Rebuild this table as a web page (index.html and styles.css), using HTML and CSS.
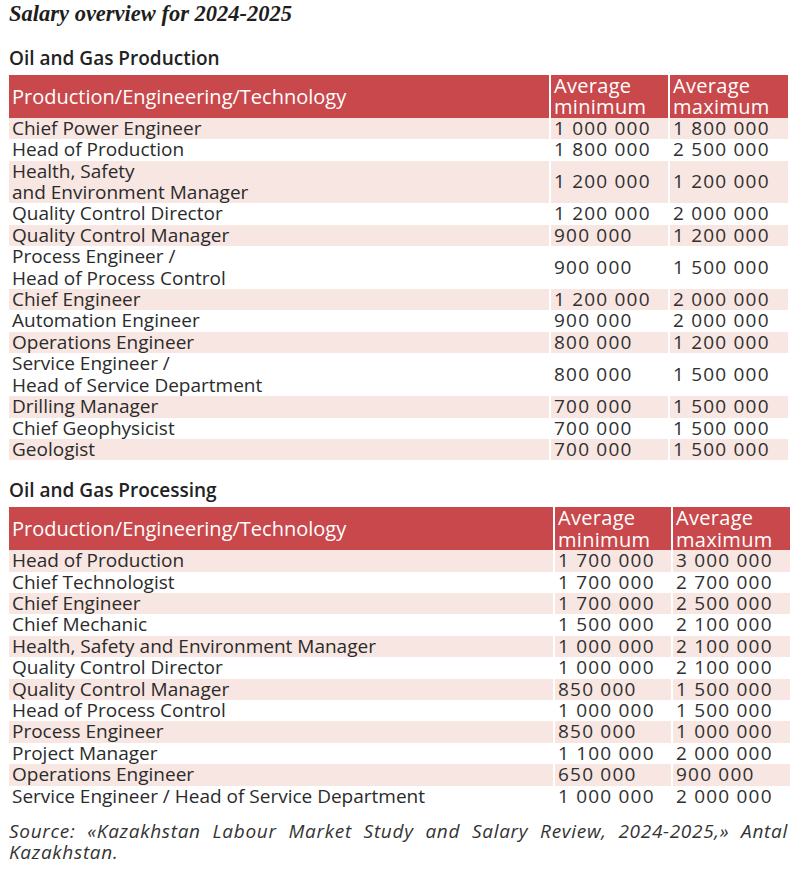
FILE: index.html
```html
<!DOCTYPE html>
<html lang="en">
<head>
  <meta charset="UTF-8" />
  <title>Salary overview for 2024-2025</title>
  <link rel="stylesheet" href="styles.css">
</head>
<body>

<h1 class="title">Salary overview for 2024-2025</h1>

<h2 class="section">Oil and Gas Production</h2>
<table class="salary first">
  <thead>
    <tr>
      <th class="role">Production/Engineering/Technology</th>
      <th class="num">Average<br>minimum</th>
      <th class="num">Average<br>maximum</th>
    </tr>
  </thead>
  <tbody>
    <tr><td>Chief Power Engineer</td><td class="num">1 000 000</td><td class="num">1 800 000</td></tr>
    <tr><td>Head of Production</td><td class="num">1 800 000</td><td class="num">2 500 000</td></tr>
    <tr><td>Health, Safety<br>and Environment Manager</td><td class="num">1 200 000</td><td class="num">1 200 000</td></tr>
    <tr><td>Quality Control Director</td><td class="num">1 200 000</td><td class="num">2 000 000</td></tr>
    <tr><td>Quality Control Manager</td><td class="num">900 000</td><td class="num">1 200 000</td></tr>
    <tr><td>Process Engineer /<br>Head of Process Control</td><td class="num">900 000</td><td class="num">1 500 000</td></tr>
    <tr><td>Chief Engineer</td><td class="num">1 200 000</td><td class="num">2 000 000</td></tr>
    <tr><td>Automation Engineer</td><td class="num">900 000</td><td class="num">2 000 000</td></tr>
    <tr><td>Operations Engineer</td><td class="num">800 000</td><td class="num">1 200 000</td></tr>
    <tr><td>Service Engineer /<br>Head of Service Department</td><td class="num">800 000</td><td class="num">1 500 000</td></tr>
    <tr><td>Drilling Manager</td><td class="num">700 000</td><td class="num">1 500 000</td></tr>
    <tr><td>Chief Geophysicist</td><td class="num">700 000</td><td class="num">1 500 000</td></tr>
    <tr><td>Geologist</td><td class="num">700 000</td><td class="num">1 500 000</td></tr>
  </tbody>
</table>

<h2 class="section second-head">Oil and Gas Processing</h2>
<table class="salary second">
  <thead>
    <tr>
      <th class="role">Production/Engineering/Technology</th>
      <th class="num">Average<br>minimum</th>
      <th class="num">Average<br>maximum</th>
    </tr>
  </thead>
  <tbody>
    <tr><td>Head of Production</td><td class="num">1 700 000</td><td class="num">3 000 000</td></tr>
    <tr><td>Chief Technologist</td><td class="num">1 700 000</td><td class="num">2 700 000</td></tr>
    <tr><td>Chief Engineer</td><td class="num">1 700 000</td><td class="num">2 500 000</td></tr>
    <tr><td>Chief Mechanic</td><td class="num">1 500 000</td><td class="num">2 100 000</td></tr>
    <tr><td>Health, Safety and Environment Manager</td><td class="num">1 000 000</td><td class="num">2 100 000</td></tr>
    <tr><td>Quality Control Director</td><td class="num">1 000 000</td><td class="num">2 100 000</td></tr>
    <tr><td>Quality Control Manager</td><td class="num">850 000</td><td class="num">1 500 000</td></tr>
    <tr><td>Head of Process Control</td><td class="num">1 000 000</td><td class="num">1 500 000</td></tr>
    <tr><td>Process Engineer</td><td class="num">850 000</td><td class="num">1 000 000</td></tr>
    <tr><td>Project Manager</td><td class="num">1 100 000</td><td class="num">2 000 000</td></tr>
    <tr><td>Operations Engineer</td><td class="num">650 000</td><td class="num">900 000</td></tr>
    <tr><td>Service Engineer / Head of Service Department</td><td class="num">1 000 000</td><td class="num">2 000 000</td></tr>
  </tbody>
</table>

<p class="source">Source: «Kazakhstan Labour Market Study and Salary Review, 2024-2025,» Antal Kazakhstan.</p>

</body>
</html>
```

FILE: styles.css
```css
* {
  margin: 0;
  padding: 0;
  box-sizing: border-box;
}

body {
  background: white;
  padding: 0 9px;
  color: #2b2b2b;
  font-family: "Open Sans", sans-serif;
}

.title {
  font-family: "Liberation Serif", serif;
  font-style: italic;
  font-weight: bold;
  font-size: 22.5px;
  line-height: 26px;
  color: #1e1e1e;
  margin-top: 1px;
}

.section {
  font-family: "Open Sans", sans-serif;
  font-weight: 600;
  font-size: 19px;
  line-height: 24px;
  color: #222;
  margin-top: 19px;
  margin-bottom: 5px;
}

.second-head {
  margin-top: 18px;
  margin-bottom: 5px;
}

table {
  border-collapse: collapse;
}

.first {
  width: 779px;
}

.second {
  width: 781px;
}

th, td {
  font-size: 19px;
  font-weight: normal;
  line-height: 21.4px;
  text-align: left;
  padding: 0 3px;
  vertical-align: middle;
}

th {
  background: #c8484b;
  color: white;
  font-size: 20px;
}

th.num {
  vertical-align: top;
  letter-spacing: 0.3px;
}

.num {
  border-left: 2px solid white;
}

td.num {
  letter-spacing: 1.2px;
  color: #303030;
}

.first .num {
  width: 119px;
}

.second .num {
  width: 118px;
}

tbody tr:nth-child(odd) td {
  background: #f8e6e2;
}

.source {
  font-style: italic;
  font-size: 19px;
  letter-spacing: 0.7px;
  line-height: 21px;
  text-align: justify;
  color: #333;
  margin-top: 14px;
}
```
